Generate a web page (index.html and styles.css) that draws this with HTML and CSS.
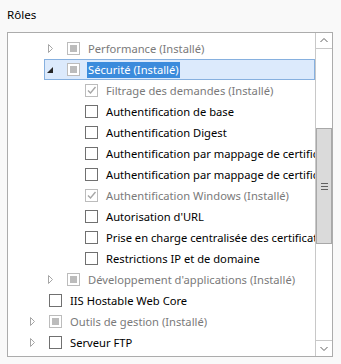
FILE: index.html
```html
<!DOCTYPE html>
<html lang="fr">
<head>
    <meta charset="UTF-8">
    <meta name="viewport" content="width=device-width, initial-scale=1.0">
    <title>Rôles</title>
    <link rel="stylesheet" href="styles.css">
</head>
<body>
    <div class="title">Rôles</div>

    <div class="listbox">
        <div class="tree">
            <div class="row lvl1 disabled">
                <span class="exp"><svg width="23" height="21"><path d="M4.5 6.5 L4.5 14.5 L8.5 10.5 Z" fill="none" stroke="#a6a6a6"/></svg></span>
                <span class="cb partial"></span>
                <span class="label">Performance (Installé)</span>
            </div>
            <div class="row lvl1 disabled selected">
                <span class="exp"><svg width="23" height="21"><path d="M9 8 L9 14 L3 14 Z" fill="#262626"/></svg></span>
                <span class="cb partial"></span>
                <span class="label">Sécurité (Installé)</span>
            </div>
            <div class="row lvl2 disabled">
                <span class="exp"></span>
                <span class="cb checked"><svg width="11" height="11"><path d="M2 5.5 L4.5 8 L9.5 2" fill="none" stroke="#a6a6a6" stroke-width="1.4"/></svg></span>
                <span class="label">Filtrage des demandes (Installé)</span>
            </div>
            <div class="row lvl2">
                <span class="exp"></span>
                <span class="cb"></span>
                <span class="label">Authentification de base</span>
            </div>
            <div class="row lvl2">
                <span class="exp"></span>
                <span class="cb"></span>
                <span class="label">Authentification Digest</span>
            </div>
            <div class="row lvl2">
                <span class="exp"></span>
                <span class="cb"></span>
                <span class="label">Authentification par mappage de certificat client</span>
            </div>
            <div class="row lvl2">
                <span class="exp"></span>
                <span class="cb"></span>
                <span class="label">Authentification par mappage de certificat client IIS</span>
            </div>
            <div class="row lvl2 disabled">
                <span class="exp"></span>
                <span class="cb checked"><svg width="11" height="11"><path d="M2 5.5 L4.5 8 L9.5 2" fill="none" stroke="#a6a6a6" stroke-width="1.4"/></svg></span>
                <span class="label">Authentification Windows (Installé)</span>
            </div>
            <div class="row lvl2">
                <span class="exp"></span>
                <span class="cb"></span>
                <span class="label">Autorisation d'URL</span>
            </div>
            <div class="row lvl2">
                <span class="exp"></span>
                <span class="cb"></span>
                <span class="label">Prise en charge centralisée des certificats SSL</span>
            </div>
            <div class="row lvl2">
                <span class="exp"></span>
                <span class="cb"></span>
                <span class="label">Restrictions IP et de domaine</span>
            </div>
            <div class="row lvl1 disabled">
                <span class="exp"><svg width="23" height="21"><path d="M4.5 6.5 L4.5 14.5 L8.5 10.5 Z" fill="none" stroke="#a6a6a6"/></svg></span>
                <span class="cb partial"></span>
                <span class="label">Développement d'applications (Installé)</span>
            </div>
            <div class="row lvl0">
                <span class="exp"></span>
                <span class="cb"></span>
                <span class="label">IIS Hostable Web Core</span>
            </div>
            <div class="row lvl0 disabled">
                <span class="exp"><svg width="23" height="21"><path d="M4.5 6.5 L4.5 14.5 L8.5 10.5 Z" fill="none" stroke="#a6a6a6"/></svg></span>
                <span class="cb partial"></span>
                <span class="label">Outils de gestion (Installé)</span>
            </div>
            <div class="row lvl0">
                <span class="exp"><svg width="23" height="21"><path d="M4.5 6.5 L4.5 14.5 L8.5 10.5 Z" fill="none" stroke="#a6a6a6"/></svg></span>
                <span class="cb"></span>
                <span class="label">Serveur FTP</span>
            </div>
        </div>

        <div class="scrollbar">
            <div class="sb-btn up"><svg width="16" height="15"><path d="M4.5 9 L8 5.5 L11.5 9" fill="none" stroke="#606060"/></svg></div>
            <div class="sb-track">
                <div class="thumb"><span class="grip"></span></div>
            </div>
            <div class="sb-btn down"><svg width="16" height="15"><path d="M4.5 6 L8 9.5 L11.5 6" fill="none" stroke="#606060"/></svg></div>
        </div>
    </div>
</body>
</html>
```

FILE: styles.css
```css
* {
    box-sizing: border-box;
}

body {
    margin: 0;
    background-color: #f9f9f9;
    font-family: 'Noto Sans', sans-serif;
    font-size: 11.2px;
    color: #000;
}

.title {
    height: 32px;
    padding: 7px 0 0 7px;
    line-height: 16px;
    font-size: 11.6px;
}

.listbox {
    display: flex;
    width: 326px;
    height: 325px;
    margin-left: 7px;
    border: 1px solid #acacac;
    background: #fff;
    overflow: hidden;
}

.tree {
    flex: 1;
    min-width: 0;
    padding-top: 5px;
    overflow: hidden;
}

.row {
    display: flex;
    align-items: center;
    height: 21px;
    white-space: nowrap;
    overflow: hidden;
}

.lvl0 { margin-left: 18px; }
.lvl1 { margin-left: 36px; }
.lvl2 { margin-left: 54px; }

.row.selected {
    background: #dceafc;
    border: 1px solid #86b0df;
}

.row.selected .exp {
    margin-left: -1px;
}

.exp {
    flex: 0 0 23px;
    height: 21px;
}

.exp svg {
    display: block;
}

.cb {
    flex: 0 0 13px;
    height: 13px;
    border: 1px solid #707070;
    background: #fff;
    position: relative;
}

.disabled .cb {
    border-color: #bcbcbc;
}

.cb.partial::after {
    content: "";
    position: absolute;
    left: 2px;
    top: 2px;
    width: 7px;
    height: 7px;
    background: #bcbcbc;
}

.cb svg {
    display: block;
}

.label {
    margin-left: 7px;
    padding: 0 1px;
    line-height: 16px;
}

.disabled .label {
    color: #7a7a7a;
}

.selected .label {
    background: #3b8bdc;
    color: #fff;
}

.scrollbar {
    flex: 0 0 17px;
    display: flex;
    flex-direction: column;
    border-left: 1px solid #c8c8c8;
}

.sb-btn {
    height: 16px;
}

.sb-btn svg {
    display: block;
}

.sb-btn.up {
    border-bottom: 1px solid #c8c8c8;
}

.sb-btn.down {
    border-top: 1px solid #c8c8c8;
}

.sb-track {
    flex: 1;
}

.thumb {
    display: flex;
    align-items: center;
    justify-content: center;
    height: 116px;
    margin-top: 79px;
    border: 1px solid #a8a8a8;
    background: #dadada;
}

.grip {
    width: 7px;
    height: 7px;
    border-top: 1px solid #606060;
    border-bottom: 1px solid #606060;
    background: linear-gradient(#606060, #606060) center / 100% 1px no-repeat;
}
```
